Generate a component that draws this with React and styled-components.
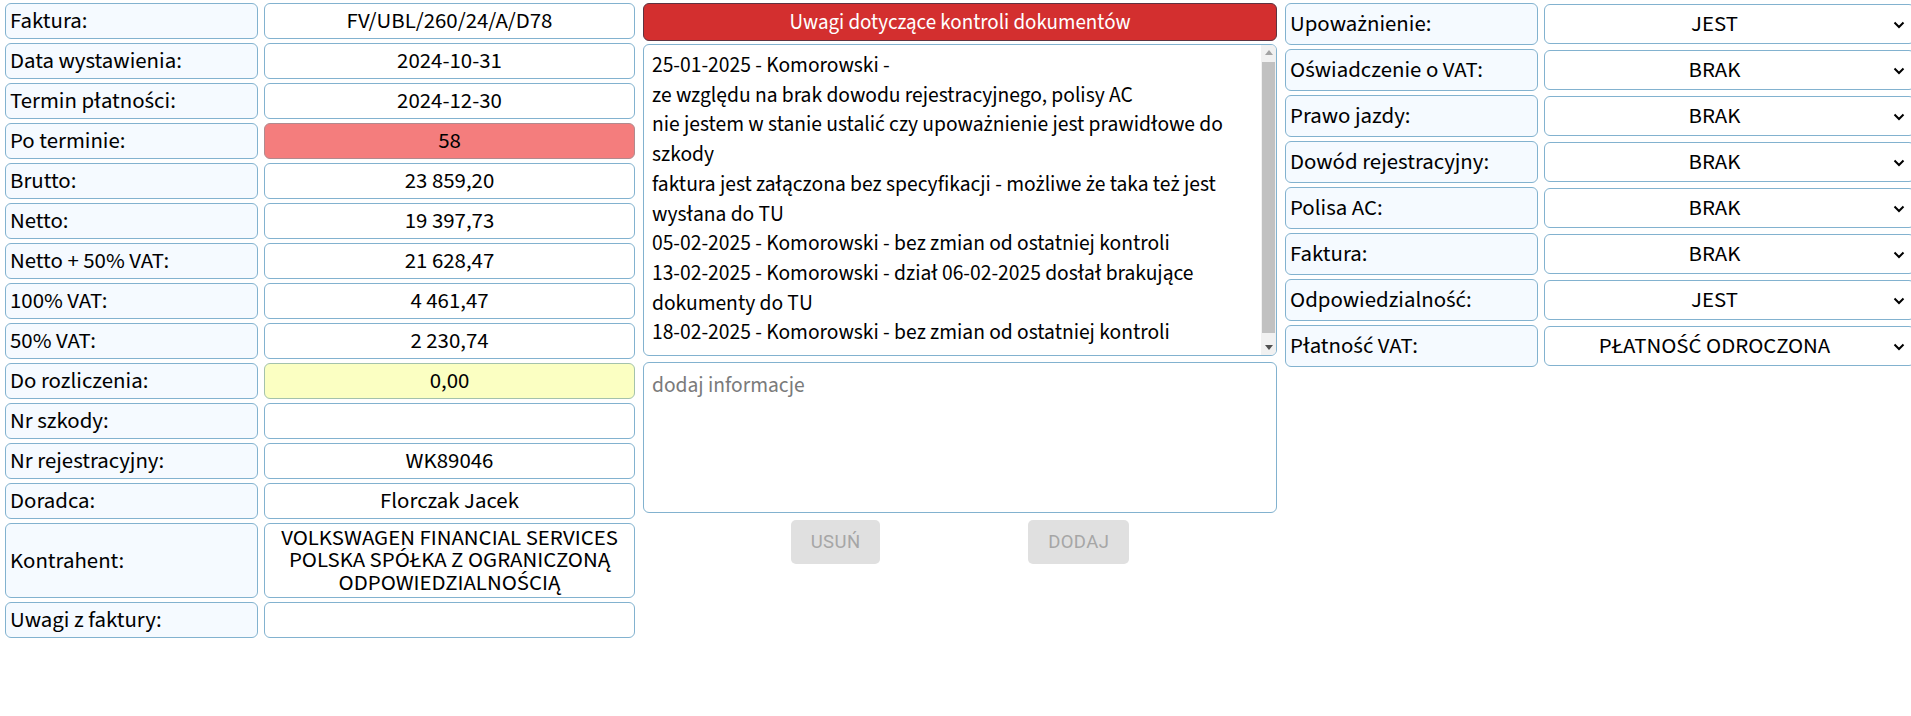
import React from "react";
import styled, { createGlobalStyle } from "styled-components";

const GlobalStyle = createGlobalStyle`
  html, body {
    margin: 0;
    overflow: hidden;
    background: #fff;
  }
  body {
    font-family: "Source Sans 3", "Carlito", sans-serif;
    color: #000;
  }
`;

const Page = styled.div`
  display: flex;
  align-items: flex-start;
  gap: 8px;
  padding: 3px 0 0 5px;
  width: max-content;
`;

const FieldGrid = styled.div`
  display: grid;
  grid-template-columns: 253px 371px;
  column-gap: 6px;
  row-gap: ${({ $rowGap }) => $rowGap}px;
  align-items: center;
`;

const Label = styled.div`
  box-sizing: border-box;
  display: flex;
  align-items: center;
  height: ${({ $h }) => $h}px;
  padding: 0 4px;
  background: #f5faff;
  border: 1px solid #82b2cf;
  border-radius: 6px;
  font-size: 22.8px;
  white-space: nowrap;
`;

const tones = {
  plain: { bg: "#ffffff", border: "#82b2cf" },
  late: { bg: "#f47d7d", border: "#b08a8e" },
  settle: { bg: "#fbffc2", border: "#a3c2ac" },
};

const Value = styled.div`
  box-sizing: border-box;
  display: flex;
  align-items: center;
  justify-content: center;
  text-align: center;
  height: ${({ $h }) => $h}px;
  padding: 0 6px;
  background: ${({ $tone }) => tones[$tone || "plain"].bg};
  border: 1px solid ${({ $tone }) => tones[$tone || "plain"].border};
  border-radius: 6px;
  font-size: 22.8px;
  line-height: 22.5px;
`;

const Middle = styled.div`
  width: 634px;
  display: flex;
  flex-direction: column;
`;

const Header = styled.div`
  box-sizing: border-box;
  height: 38px;
  display: flex;
  align-items: center;
  justify-content: center;
  background: #d32f2f;
  border: 1px solid #5d3340;
  border-radius: 6px;
  color: #fff;
  font-size: 21px;
`;

const Notes = styled.div`
  box-sizing: border-box;
  margin-top: 3px;
  height: 312px;
  display: flex;
  overflow: hidden;
  border: 1px solid #82b2cf;
  border-radius: 6px;
`;

const NotesText = styled.div`
  flex: 1;
  overflow: hidden;
  padding: 6px 8px;
  font-size: 21.5px;
  line-height: 29.7px;
`;

const NoteLine = styled.div``;

const Scrollbar = styled.div`
  width: 15px;
  flex: none;
  display: flex;
  flex-direction: column;
  background: #f1f1f1;
`;

const ScrollArrow = styled.div`
  height: 15px;
  flex: none;
  display: flex;
  align-items: center;
  justify-content: center;

  &::before {
    content: "";
    width: 0;
    height: 0;
    border-left: 4px solid transparent;
    border-right: 4px solid transparent;
    ${({ $dir, $color }) =>
      $dir === "up"
        ? `border-bottom: 5px solid ${$color};`
        : `border-top: 5px solid ${$color};`}
  }
`;

const ScrollThumb = styled.div`
  flex: 1;
  margin: 2px 1px 7px;
  background: #c1c1c1;
`;

const AddBox = styled.textarea`
  box-sizing: border-box;
  margin-top: 6px;
  height: 151px;
  resize: none;
  padding: 8px 8px;
  border: 1px solid #82b2cf;
  border-radius: 6px;
  font-family: "Source Sans 3", "Carlito", sans-serif;
  font-size: 21.5px;
  line-height: 29.7px;
  outline: none;
  &::placeholder {
    color: #7a7a7a;
  }
`;

const Actions = styled.div`
  display: flex;
  justify-content: space-evenly;
  margin-top: 7px;
`;

const Button = styled.button`
  box-sizing: border-box;
  height: 44px;
  padding: 0 20px;
  border: none;
  border-radius: 5px;
  background: #e0e0e0;
  color: #a6a6a6;
  font-family: Roboto, "Liberation Sans", sans-serif;
  font-weight: 400;
  font-size: 18.5px;
  letter-spacing: 0.4px;
  text-transform: uppercase;
`;

const SelectBox = styled.div`
  box-sizing: border-box;
  position: relative;
  height: 40px;
  display: flex;
  align-items: center;
  justify-content: center;
  padding-right: 30px;
  background: #fff;
  border: 1px solid #82b2cf;
  border-radius: 6px;
  font-size: 22.8px;
`;

const Chevron = styled.svg`
  position: absolute;
  right: 8px;
  top: 50%;
  width: 14px;
  height: 14px;
  margin-top: -6px;
`;

const invoice = [
  ["Faktura:", "FV/UBL/260/24/A/D78"],
  ["Data wystawienia:", "2024-10-31"],
  ["Termin płatności:", "2024-12-30"],
  ["Po terminie:", "58", "late"],
  ["Brutto:", "23 859,20"],
  ["Netto:", "19 397,73"],
  ["Netto + 50% VAT:", "21 628,47"],
  ["100% VAT:", "4 461,47"],
  ["50% VAT:", "2 230,74"],
  ["Do rozliczenia:", "0,00", "settle"],
  ["Nr szkody:", ""],
  ["Nr rejestracyjny:", "WK89046"],
  ["Doradca:", "Florczak Jacek"],
  ["Kontrahent:", "VOLKSWAGEN FINANCIAL SERVICES POLSKA SPÓŁKA Z OGRANICZONĄ ODPOWIEDZIALNOŚCIĄ", "plain", 75],
  ["Uwagi z faktury:", ""],
];

const notes = [
  "25-01-2025 - Komorowski -",
  "ze względu na brak dowodu rejestracyjnego, polisy AC",
  "nie jestem w stanie ustalić czy upoważnienie jest prawidłowe do szkody",
  "faktura jest załączona bez specyfikacji - możliwe że taka też jest wysłana do TU",
  "05-02-2025 - Komorowski - bez zmian od ostatniej kontroli",
  "13-02-2025 - Komorowski - dział 06-02-2025 dosłał brakujące dokumenty do TU",
  "18-02-2025 - Komorowski - bez zmian od ostatniej kontroli",
];

const documents = [
  ["Upoważnienie:", "JEST"],
  ["Oświadczenie o VAT:", "BRAK"],
  ["Prawo jazdy:", "BRAK"],
  ["Dowód rejestracyjny:", "BRAK"],
  ["Polisa AC:", "BRAK"],
  ["Faktura:", "BRAK"],
  ["Odpowiedzialność:", "JEST"],
  ["Płatność VAT:", "PŁATNOŚĆ ODROCZONA"],
];

const App = () => {
  return (
    <>
      <GlobalStyle />
      <Page>
        <FieldGrid $rowGap={4}>
          {invoice.map(([label, value, tone, h]) => (
            <React.Fragment key={label}>
              <Label $h={h || 36}>{label}</Label>
              <Value $h={h || 36} $tone={tone}>
                {value}
              </Value>
            </React.Fragment>
          ))}
        </FieldGrid>

        <Middle>
          <Header>Uwagi dotyczące kontroli dokumentów</Header>
          <Notes>
            <NotesText>
              {notes.map((n) => (
                <NoteLine key={n}>{n}</NoteLine>
              ))}
            </NotesText>
            <Scrollbar>
              <ScrollArrow $dir="up" $color="#a3a3a3" />
              <ScrollThumb />
              <ScrollArrow $dir="down" $color="#505050" />
            </Scrollbar>
          </Notes>
          <AddBox placeholder="dodaj informacje" />
          <Actions>
            <Button disabled>Usuń</Button>
            <Button disabled>Dodaj</Button>
          </Actions>
        </Middle>

        <FieldGrid $rowGap={4}>
          {documents.map(([label, value]) => (
            <React.Fragment key={label}>
              <Label $h={42}>{label}</Label>
              <SelectBox>
                {value}
                <Chevron viewBox="0 0 14 14">
                  <path d="M2.5 4.5 L7 9 L11.5 4.5" fill="none" stroke="#000" strokeWidth="2" />
                </Chevron>
              </SelectBox>
            </React.Fragment>
          ))}
        </FieldGrid>
      </Page>
    </>
  );
};

export default App;
